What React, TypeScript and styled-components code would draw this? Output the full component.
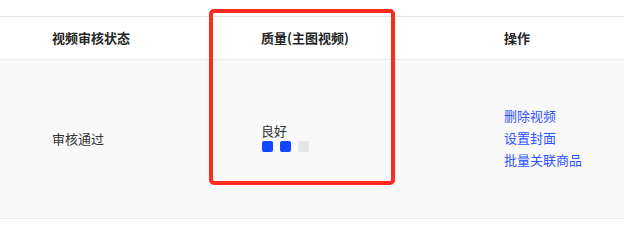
import React from 'react';
import styled, { createGlobalStyle } from 'styled-components';

const GlobalStyle = createGlobalStyle`
  html, body {
    margin: 0;
    padding: 0;
    background: #fff;
  }
  body {
    font-family: "Noto Sans CJK SC", "Noto Sans", sans-serif;
    font-size: 13px;
    color: #333;
  }
`;

const Page = styled.div`
  position: relative;
  width: 624px;
  height: 238px;
  padding-top: 16px;
  box-sizing: border-box;
`;

const Table = styled.div`
  border-top: 1px solid #e3e3ea;
`;

const Row = styled.div<{ $head?: boolean }>`
  display: grid;
  grid-template-columns: 209px 247px 1fr;
  align-items: center;
  height: ${(p) => (p.$head ? '42px' : '158px')};
  background: ${(p) => (p.$head ? '#fff' : '#f9f9fa')};
  border-bottom: 1px solid ${(p) => (p.$head ? '#e8e8ec' : '#ececef')};
`;

const Cell = styled.div<{ $pad?: number; $head?: boolean }>`
  padding-left: ${(p) => p.$pad ?? 52}px;
  font-weight: ${(p) => (p.$head ? 700 : 400)};
  color: ${(p) => (p.$head ? '#262626' : '#333')};
  line-height: 18px;
`;

const Quality = styled.div`
  display: flex;
  flex-direction: column;
  margin-top: -4px;
`;

const Dots = styled.div`
  display: flex;
  gap: 7px;
  margin-top: 1px;
  padding-left: 1px;
`;

const Dot = styled.span<{ $on: boolean }>`
  width: 11px;
  height: 11px;
  border-radius: 2px;
  background: ${(p) => (p.$on ? '#1446ff' : '#e6e6e8')};
`;

const Links = styled.div`
  display: flex;
  flex-direction: column;
  margin-top: -2px;
`;

const Link = styled.a`
  color: #2f52ff;
  line-height: 22px;
  text-decoration: none;
  cursor: pointer;
`;

const Highlight = styled.div`
  position: absolute;
  left: 209px;
  top: 9px;
  width: 186px;
  height: 176px;
  box-sizing: border-box;
  border: 4px solid #ff2a1f;
  border-radius: 5px;
  pointer-events: none;
`;

const level = 2;

export default function App() {
  return (
    <Page>
      <GlobalStyle />
      <Table>
        <Row $head>
          <Cell $head>视频审核状态</Cell>
          <Cell $head>质量(主图视频)</Cell>
          <Cell $head $pad={48}>操作</Cell>
        </Row>
        <Row>
          <Cell>审核通过</Cell>
          <Cell>
            <Quality>
              <span>良好</span>
              <Dots>
                {[0, 1, 2].map((i) => (
                  <Dot key={i} $on={i < level} />
                ))}
              </Dots>
            </Quality>
          </Cell>
          <Cell $pad={48}>
            <Links>
              <Link>删除视频</Link>
              <Link>设置封面</Link>
              <Link>批量关联商品</Link>
            </Links>
          </Cell>
        </Row>
      </Table>
      <Highlight />
    </Page>
  );
}
